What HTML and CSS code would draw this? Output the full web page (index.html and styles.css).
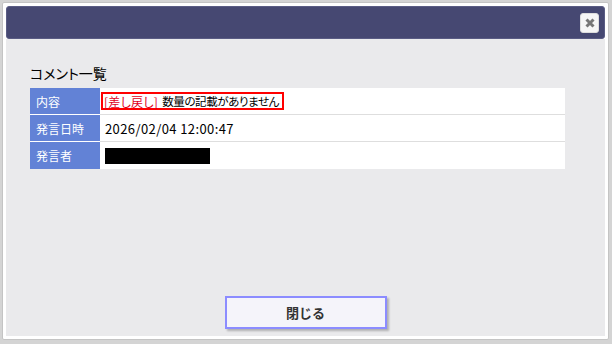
FILE: index.html
```html
<!DOCTYPE html>
<html lang="ja">
<head>
  <meta charset="UTF-8" />
  <title>コメント一覧</title>
  <link rel="stylesheet" href="styles.css">
</head>
<body>

<div class="dialog">
  <div class="titlebar">
    <button class="close" title="close">
      <svg width="10" height="10" viewBox="0 0 10 10">
        <path d="M1.5 1.5 L8.5 8.5 M8.5 1.5 L1.5 8.5" stroke="#777" stroke-width="3" stroke-linecap="butt" />
      </svg>
    </button>
  </div>

  <div class="content">
    <h2>コメント一覧</h2>

    <div class="comment-table">
      <div class="label">内容</div>
      <div class="value">
        <span class="remark"><span class="tag">[差し戻し]</span><span class="msg">数量の記載がありません</span></span>
      </div>

      <div class="label">発言日時</div>
      <div class="value date">2026/02/04 12:00:47</div>

      <div class="label last">発言者</div>
      <div class="value last"><span class="masked"></span></div>
    </div>

    <button class="close-btn">閉じる</button>
  </div>
</div>

</body>
</html>
```

FILE: styles.css
```css
body {
  margin: 0;
  font-family: "Noto Sans CJK JP", "Noto Sans", sans-serif;
  background: #d4d4d4;
  color: #000;
}

.dialog {
  box-sizing: border-box;
  width: 607px;
  height: 338px;
  margin: 2px 0 0 2px;
  padding: 3px;
  background: #fff;
  border: 1px solid #c4c4c4;
  border-radius: 2px;
  display: flex;
  flex-direction: column;
}

.titlebar {
  box-sizing: border-box;
  height: 33px;
  background: #464872;
  border: 1px solid #5a5c84;
  border-radius: 3px;
  display: flex;
  justify-content: flex-end;
  align-items: flex-start;
  padding: 6px 5px 0 0;
}

.close {
  width: 19px;
  height: 20px;
  padding: 0;
  border: 1px solid #ddd;
  border-radius: 3px;
  background: #f6f6f6;
  display: flex;
  align-items: center;
  justify-content: center;
}

.content {
  flex: 1;
  background: #eaeaec;
  padding: 24px 0 0 24px;
  display: flex;
  flex-direction: column;
}

h2 {
  margin: 0 0 5px;
  font-size: 14px;
  font-weight: normal;
  line-height: 20px;
  font-feature-settings: "palt";
}

.comment-table {
  width: 535px;
  display: grid;
  grid-template-columns: 70px 1fr;
  font-size: 12px;
}

.label,
.value {
  height: 27px;
  box-sizing: border-box;
  display: flex;
  align-items: center;
}

.label {
  background: #6282d6;
  color: #fff;
  padding-left: 6px;
  border-bottom: 1px solid #fff;
}

.value {
  background: #fff;
  padding-left: 5px;
  border-bottom: 1px solid #dedede;
  font-size: 13px;
}

.date {
  letter-spacing: 0.4px;
}

.last {
  border-bottom: none;
}

.remark {
  margin-left: -4px;
  border: 2px solid #f00;
  height: 18px;
  box-sizing: border-box;
  padding: 0 3px 0 1px;
  display: flex;
  align-items: center;
  font-size: 12px;
  font-feature-settings: "palt";
}

.tag {
  color: #e0001a;
  letter-spacing: 0.3px;
}

.msg {
  margin-left: 4px;
  font-size: 11.5px;
  letter-spacing: -0.4px;
}

.masked {
  display: block;
  width: 105px;
  height: 16px;
  background: #000;
}

.close-btn {
  align-self: center;
  margin: auto 0 7px -24px;
  width: 162px;
  height: 33px;
  border: 2px solid #8c8cff;
  background: #f5f4fa;
  box-shadow: 2px 2px 2px rgba(0, 0, 0, 0.25);
  font-family: inherit;
  font-size: 13px;
  font-weight: bold;
  color: #333;
}
```
